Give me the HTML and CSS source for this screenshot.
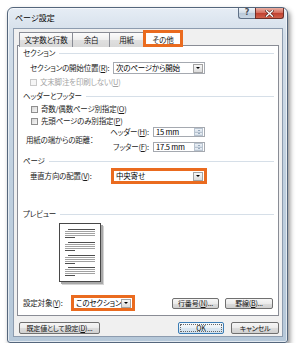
FILE: index.html
```html
<!DOCTYPE html>
<html lang="ja">

<head>
  <meta charset="UTF-8" />
  <meta name="viewport" content="width=device-width, initial-scale=1.0" />
  <title>ページ設定</title>
  <link rel="stylesheet" href="styles.css">
</head>

<body>
  <div class="window">
    <div class="titlebar">
      <span class="title">ページ設定</span>
      <div class="caps">
        <span class="cap help">?</span>
        <span class="cap close">
          <svg width="9" height="7" viewBox="0 0 9 7">
            <path d="M1.5 0.8 L7.5 6.2 M7.5 0.8 L1.5 6.2" stroke="#5a2a24" stroke-width="2.6" stroke-linecap="square" />
            <path d="M1.5 0.8 L7.5 6.2 M7.5 0.8 L1.5 6.2" stroke="#fff" stroke-width="1.4" stroke-linecap="square" />
          </svg>
        </span>
      </div>
    </div>

    <div class="client">
      <div class="tabs">
        <span class="tab t1">文字数と行数</span>
        <span class="tab t2">余白</span>
        <span class="tab t3">用紙</span>
        <span class="tab active">その他</span>
      </div>

      <div class="panel">
        <div class="heading">セクション</div>
        <div class="row r-start">
          <span class="lbl">セクションの開始位置(<u>R</u>):</span>
          <span class="select wide">次のページから開始<span class="drop"></span></span>
        </div>
        <div class="check disabled">
          <span class="box"></span>文末脚注を印刷しない(<u>U</u>)
        </div>

        <div class="heading h-hf">ヘッダーとフッター</div>
        <div class="check c1">
          <span class="box"></span>奇数/偶数ページ別指定(<u>O</u>)
        </div>
        <div class="check">
          <span class="box"></span>先頭ページのみ別指定(<u>P</u>)
        </div>
        <div class="dist">
          <span class="dist-label">用紙の端からの距離：</span>
          <div class="fields">
            <div class="field">
              <span class="flbl">ヘッダー(<u>H</u>):</span>
              <span class="spin">15 mm<span class="arrows"><i class="up"></i><i class="down"></i></span></span>
            </div>
            <div class="field">
              <span class="flbl">フッター(<u>F</u>):</span>
              <span class="spin">17.5 mm<span class="arrows"><i class="up"></i><i class="down"></i></span></span>
            </div>
          </div>
        </div>

        <div class="heading h-page">ページ</div>
        <div class="row r-valign">
          <span class="lbl">垂直方向の配置(<u>V</u>):</span>
          <span class="select wide mark">中央寄せ<span class="drop"></span></span>
        </div>

        <div class="heading h-preview">プレビュー</div>
        <svg class="preview" width="45" height="62" viewBox="0 0 45 62">
          <rect x="3" y="3" width="42" height="59" fill="#d4d4d4" />
          <rect x="2" y="2" width="42" height="59" fill="#a9a9a9" />
          <rect x="0.5" y="0.5" width="41" height="58" fill="#fff" stroke="#474747" />
          <g stroke-width="1">
            <path d="M9 6.5 H36 M6 14.5 H16 M9 19.5 H36 M6 27.5 H16 M9 32.5 H36 M6 40.5 H16 M9 44.5 H36 M6 52.5 H16" stroke="#4e4e4e" />
            <path d="M6 8.5 H36 M6 10.5 H36 M6 12.5 H36 M6 21.5 H36 M6 23.5 H36 M6 25.5 H36 M6 34.5 H36 M6 36.5 H36 M6 38.5 H36 M6 46.5 H36 M6 48.5 H36 M6 50.5 H36" stroke="#a2a2a2" />
          </g>
        </svg>

        <div class="row r-apply">
          <span class="lbl-apply">設定対象(<u>Y</u>):</span>
          <span class="select narrow mark">このセクション<span class="drop"></span></span>
          <span class="btn b-line">行番号(<u>N</u>)...</span>
          <span class="btn b-border">罫線(<u>B</u>)...</span>
        </div>
      </div>

      <div class="footer">
        <span class="btn b-default">既定値として設定(<u>D</u>)...</span>
        <span class="btn b-ok">OK</span>
        <span class="btn b-cancel">キャンセル</span>
      </div>
    </div>
  </div>
</body>

</html>
```

FILE: styles.css
```css
html,
body {
  margin: 0;
  padding: 0;
}

body {
  background: #fff;
  font-family: "Noto Sans CJK JP", "Noto Sans", sans-serif;
  font-size: 7.5px;
  line-height: 1;
  letter-spacing: -0.2px;
  white-space: nowrap;
  color: #1c1c1c;
  font-feature-settings: "palt";
}

u {
  text-decoration-thickness: 1px;
  text-underline-offset: 1px;
}

/* window frame */
.window {
  box-sizing: border-box;
  width: 281px;
  height: 336px;
  margin: 7px 0 0 7px;
  padding: 0 4px 5px 5px;
  border: 1px solid #54667c;
  border-radius: 6px 6px 3px 3px;
  background: linear-gradient(to bottom, #e6edf5 0, #d3dee9 8%, #c0d0df 50%, #b6c8d9 100%);
  box-shadow: 2px 3px 5px rgba(0, 0, 0, 0.45), inset 0 0 0 1px rgba(255, 255, 255, 0.6);
}

.titlebar {
  height: 20px;
  display: flex;
  align-items: center;
  justify-content: space-between;
}

.title {
  padding-left: 2px;
  font-size: 8px;
  letter-spacing: 0;
  color: #000;
}

.caps {
  align-self: flex-start;
  display: flex;
  margin-right: -1px;
}

.cap {
  box-sizing: border-box;
  height: 11px;
  border: 1px solid #5f7086;
  border-top: 0;
  display: flex;
  align-items: center;
  justify-content: center;
}

.help {
  width: 17px;
  border-right: 0;
  border-radius: 0 0 0 3px;
  background: linear-gradient(to bottom, #f1f5f9, #d0dbe6 50%, #b9c9d9 51%, #c9d6e3);
  color: #4a4f57;
  font-family: "DejaVu Sans", sans-serif;
  font-size: 8px;
  font-weight: bold;
}

.close {
  width: 29px;
  border-color: #6e2f28;
  border-radius: 0 0 3px 0;
  background: linear-gradient(to bottom, #eab0a4, #d77262 45%, #c0402f 52%, #d0614b);
}

/* client area */
.client {
  box-sizing: border-box;
  height: 309px;
  border: 1px solid #8d9caf;
  background: #f0f0f0;
  padding: 1px 2px 0 3px;
}

.tabs {
  display: flex;
  align-items: flex-end;
  height: 17px;
  margin: 0 0 -2px 2px;
}

.tab {
  box-sizing: border-box;
  height: 15px;
  border: 1px solid #898c95;
  border-bottom: 0;
  background: linear-gradient(to bottom, #fcfcfc, #eeeeee 50%, #e0e0e0 51%, #d8d8d8);
  display: flex;
  justify-content: center;
  padding-top: 3px;
  color: #111;
}

.tab + .tab {
  margin-left: -1px;
}

.t1 {
  width: 54px;
}

.t2 {
  width: 38px;
}

.t3 {
  width: 35px;
}

.tab.active {
  width: 40px;
  height: 17px;
  padding-top: 5px;
  background: #fff;
  position: relative;
  z-index: 1;
  outline: 3px solid #ea6b1f;
  outline-offset: -3px;
}

.panel {
  box-sizing: border-box;
  width: 262px;
  height: 271px;
  border: 1px solid #898c95;
  background: #fff;
  padding-top: 2px;
}

.heading {
  height: 10px;
  display: flex;
  align-items: center;
  padding-left: 5px;
}

.heading::after {
  content: "";
  flex: 1;
  height: 1px;
  margin: 0 4px 0 4px;
  background: #d6dfe8;
}

.h-hf {
  margin-top: 3px;
}

.h-page {
  margin-top: 4px;
}

.h-preview {
  margin-top: 27px;
}

.row {
  height: 12px;
  display: flex;
  align-items: center;
}

.r-start,
.r-valign {
  margin-top: 4px;
  padding-left: 12px;
}

.lbl {
  width: 83px;
}

.select {
  box-sizing: border-box;
  height: 12px;
  border: 1px solid #a5a9b0;
  background: #fff;
  display: flex;
  align-items: center;
  justify-content: space-between;
  padding-left: 2px;
  color: #000;
}

.wide {
  width: 92px;
}

.narrow {
  width: 60px;
}

.mark {
  outline: 3px solid #ea6b1f;
  outline-offset: -1px;
}

.drop {
  box-sizing: border-box;
  flex: none;
  width: 10px;
  height: 9px;
  margin-right: 1px;
  border: 1px solid #a3a3a3;
  background: linear-gradient(to bottom, #f7f7f7, #dcdcdc);
  display: flex;
  align-items: center;
  justify-content: center;
}

.drop::after {
  content: "";
  border-left: 2px solid transparent;
  border-right: 2px solid transparent;
  border-top: 2px solid #000;
}

/* checkboxes */
.check {
  height: 12px;
  display: flex;
  align-items: center;
  padding-left: 13px;
}

.box {
  box-sizing: border-box;
  width: 7px;
  height: 7px;
  margin-right: 3px;
  border: 1px solid #8f8f8f;
  background: linear-gradient(135deg, #d6d6d6, #f7f7f7);
}

.disabled {
  margin-top: 2px;
  padding-left: 12px;
  color: #a3a3a3;
}

.disabled .box {
  border-color: #c9c9c9;
  background: #f6f6f6;
}

.c1 {
  margin-top: 2px;
}

/* header / footer distance */
.dist {
  display: flex;
  align-items: center;
  padding-left: 8px;
}

.dist-label {
  width: 84px;
}

.fields {
  display: flex;
  flex-direction: column;
  gap: 5px;
}

.field {
  display: flex;
  align-items: center;
}

.flbl {
  width: 39px;
  margin-right: 4px;
  text-align: right;
}

.spin {
  box-sizing: border-box;
  width: 52px;
  height: 10px;
  border: 1px solid #a5a9b0;
  display: flex;
  align-items: center;
  justify-content: space-between;
  padding-left: 2px;
  color: #000;
}

.arrows {
  display: flex;
  flex-direction: column;
  width: 9px;
  height: 8px;
  margin-right: 1px;
}

.arrows i {
  flex: 1;
  display: flex;
  align-items: center;
  justify-content: center;
  background: linear-gradient(to bottom, #eef2f7, #d3dde8);
  border: 1px solid #b8c3cf;
  box-sizing: border-box;
}

.arrows i + i {
  border-top: 0;
}

.arrows .up::after {
  content: "";
  border-left: 1.5px solid transparent;
  border-right: 1.5px solid transparent;
  border-bottom: 1.5px solid #4d6a8a;
}

.arrows .down::after {
  content: "";
  border-left: 1.5px solid transparent;
  border-right: 1.5px solid transparent;
  border-top: 1.5px solid #4d6a8a;
}

/* preview */
.preview {
  display: block;
  margin: 4px 0 0 41px;
}

.r-apply {
  margin-top: 12px;
  padding: 0 5px 0 5px;
}

.lbl-apply {
  width: 50px;
}

/* buttons */
.btn {
  box-sizing: border-box;
  height: 11px;
  border: 1px solid #707070;
  border-radius: 2px;
  background: linear-gradient(to bottom, #f6f6f6, #ebebeb 50%, #dddddd 51%, #d0d0d0);
  display: flex;
  align-items: center;
  justify-content: center;
  font-size: 7px;
  color: #111;
}

.b-line {
  width: 47px;
  margin-left: auto;
}

.b-border {
  width: 48px;
  margin-left: 6px;
}

.footer {
  display: flex;
  height: 12px;
  margin-top: 6px;
  padding: 0 1px 0 2px;
}

.footer .btn {
  height: 12px;
}

.b-default {
  width: 81px;
}

.b-ok {
  width: 46px;
  margin-left: auto;
  border-color: #3c7db5;
  outline: 1px dotted #666;
  outline-offset: -3px;
  background: linear-gradient(to bottom, #f7fafc, #e9f1f7 50%, #dae7f1 51%, #d2e1ee);
}

.b-cancel {
  width: 48px;
  margin-left: 7px;
}
```
